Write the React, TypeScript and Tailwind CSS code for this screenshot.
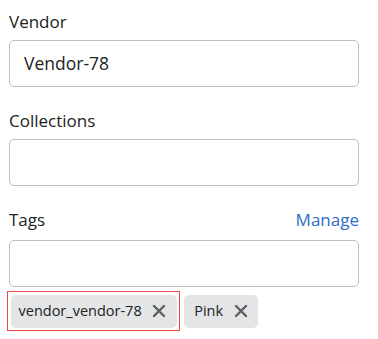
import React from 'react';

const XIcon = () => (
  <svg width="14" height="14" viewBox="0 0 14 14" fill="none">
    <path d="M2 2L12 12M12 2L2 12" stroke="#5c5f62" strokeWidth="2.4" strokeLinecap="round" />
  </svg>
);

function Field({ label, value, action, labelGap = 'mb-[6px]' }: { label: string; value?: string; action?: string; labelGap?: string }) {
  return (
    <div className="flex flex-col">
      <div className={`flex items-center justify-between h-[24px] text-[17px] leading-[24px] text-[#202223] ${labelGap}`}>
        <span>{label}</span>
        {action && <a className="text-[#2c6ecb] cursor-pointer">{action}</a>}
      </div>
      <div className="h-[47px] rounded-[5px] border border-[#babfc3] bg-white flex items-center px-[14px] text-[17.5px] text-[#202223]">
        {value}
      </div>
    </div>
  );
}

function Tag({ text, padLeft }: { text: string; padLeft: string }) {
  return (
    <div className={`flex items-center h-[33px] rounded-[5px] bg-[#e4e5e7] text-[14.5px] text-[#202223] ${padLeft}`}>
      <span>{text}</span>
      <button className="w-[35px] h-full flex items-center justify-center">
        <XIcon />
      </button>
    </div>
  );
}

export default function App() {
  return (
    <div className="w-[378px] h-[339px] bg-white pl-[9px] pr-[19px] pt-[10px]" style={{ fontFamily: '"Open Sans", sans-serif' }}>
      <div className="flex flex-col gap-[22px]">
        <Field label="Vendor" value="Vendor-78" />
        <Field label="Collections" />
        <Field label="Tags" action="Manage" labelGap="mb-[8px]" />
      </div>
      <div className="flex items-center gap-[4px] mt-[4px] -ml-[2px]">
        <div className="border-[1.5px] border-[#f04747] p-[2.5px]">
          <Tag text="vendor_vendor-78" padLeft="pl-[8px]" />
        </div>
        <Tag text="Pink" padLeft="pl-[10px]" />
      </div>
    </div>
  );
}
